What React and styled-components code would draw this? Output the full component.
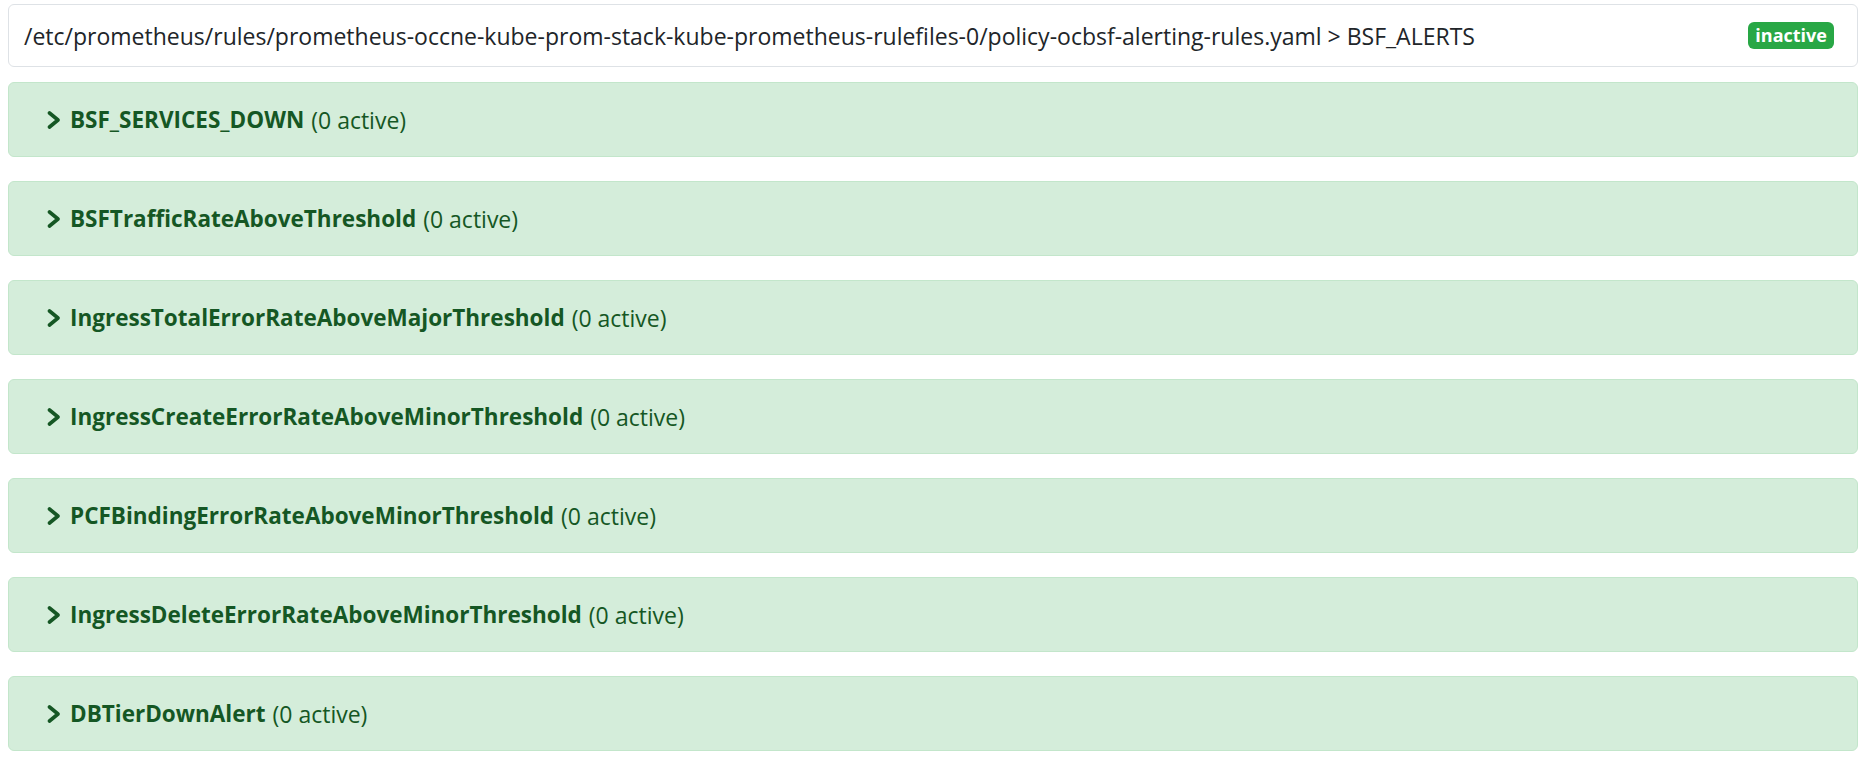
import React from 'react';
import styled, { createGlobalStyle } from 'styled-components';

const GlobalStyle = createGlobalStyle`
  html, body {
    margin: 0;
    padding: 0;
    background: #fff;
  }
  body {
    font-family: 'Open Sans', 'Noto Sans', sans-serif;
    color: #212529;
  }
`;

const Page = styled.div`
  padding: 4px 9px 0 8px;
`;

const GroupHeader = styled.div`
  height: 63px;
  box-sizing: border-box;
  border: 1px solid #dee2e6;
  border-radius: 6px;
  display: flex;
  align-items: center;
  justify-content: space-between;
  padding: 0 23px 0 15px;
  margin-bottom: 15px;
`;

const Path = styled.span`
  font-size: 23px;
  color: #212529;
`;

const Badge = styled.span`
  background: #28a745;
  color: #fff;
  font-weight: 700;
  font-size: 18px;
  line-height: 27px;
  height: 27px;
  padding: 0 7px;
  border-radius: 6px;
`;

const RuleList = styled.div`
  display: flex;
  flex-direction: column;
  gap: 24px;
`;

const RuleCard = styled.div`
  height: 75px;
  box-sizing: border-box;
  background: #d4edda;
  border: 1px solid #c3e6cb;
  border-radius: 6px;
  color: #155724;
  display: flex;
  align-items: center;
  padding-left: 38px;
  font-size: 23px;
`;

const Chevron = styled.svg`
  width: 14px;
  height: 18px;
  margin-right: 9px;
  flex-shrink: 0;
`;

const RuleName = styled.strong`
  font-weight: 700;
  font-size: 22.5px;
  margin-right: 7px;
`;

const rules = [
  'BSF_SERVICES_DOWN',
  'BSFTrafficRateAboveThreshold',
  'IngressTotalErrorRateAboveMajorThreshold',
  'IngressCreateErrorRateAboveMinorThreshold',
  'PCFBindingErrorRateAboveMinorThreshold',
  'IngressDeleteErrorRateAboveMinorThreshold',
  'DBTierDownAlert',
];

export default function App() {
  return (
    <>
      <GlobalStyle />
      <Page>
        <GroupHeader>
          <Path>
            /etc/prometheus/rules/prometheus-occne-kube-prom-stack-kube-prometheus-rulefiles-0/policy-ocbsf-alerting-rules.yaml &gt; BSF_ALERTS
          </Path>
          <Badge>inactive</Badge>
        </GroupHeader>
        <RuleList>
          {rules.map(name => (
            <RuleCard key={name}>
              <Chevron viewBox="0 0 14 18">
                <path d="M2.5 2 L11 9 L2.5 16" fill="none" stroke="#155724" strokeWidth="3.6" strokeLinecap="round" strokeLinejoin="round" />
              </Chevron>
              <RuleName>{name}</RuleName>
              <span>(0 active)</span>
            </RuleCard>
          ))}
        </RuleList>
      </Page>
    </>
  );
}
